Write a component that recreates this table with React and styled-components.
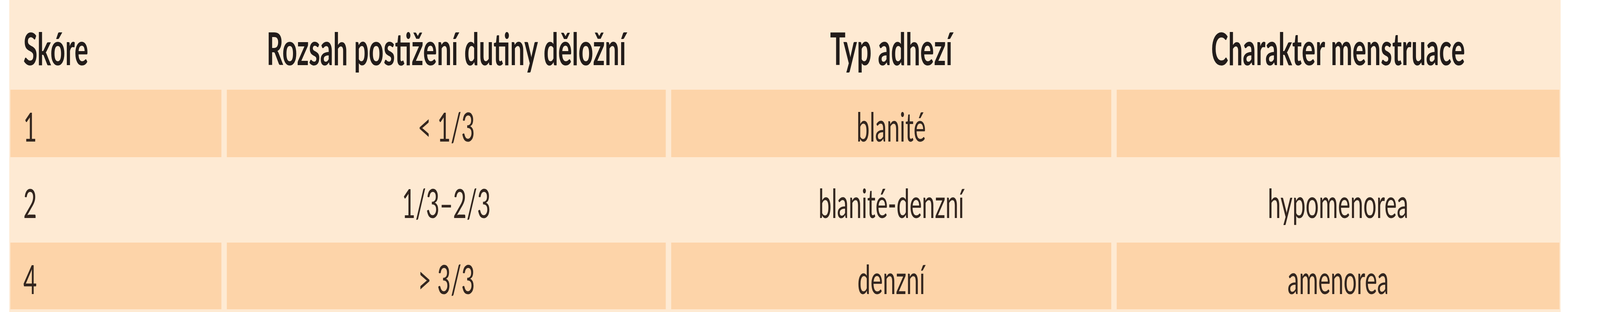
import React, { useState } from "react";
import styled, { createGlobalStyle } from "styled-components";

const DESIGN_WIDTH = 7068;

const GlobalStyle = createGlobalStyle`
  html, body {
    margin: 0;
    padding: 0;
    background: #ffffff;
    overflow: hidden;
  }
`;

const colors = {
  light: "#feead3",
  dark: "#fdd4a9",
  head: "#221c1a",
  text: "#33261f",
};

const Page = styled.div`
  width: 100vw;
  height: 800px;
  overflow: hidden;
  background: #ffffff;
`;

// the table is laid out on a 7068px wide sheet and fitted to the window width
const Sheet = styled.div`
  width: ${DESIGN_WIDTH}px;
  height: 800px;
  display: flex;
  transform: scaleX(${(props) => props.$sx});
  transform-origin: 0 0;
`;

const Table = styled.div`
  margin-left: 41px;
  width: 6853px;
  box-sizing: border-box;
  padding: 0 5px 7px;
  display: grid;
  grid-template-columns: 932px 1939px 1944px 1956px;
  grid-template-rows: 230px 173px 219px 171px;
  column-gap: 24px;
  background: ${colors.light};
  font-family: Lato, "Liberation Sans", sans-serif;
`;

const Cell = styled.div`
  display: flex;
  align-items: center;
  justify-content: ${(props) => (props.$left ? "flex-start" : "center")};
  padding-left: ${(props) => (props.$left ? "57px" : "0")};
  padding-top: ${(props) => (props.$head ? "15px" : "12px")};
  box-sizing: border-box;
  background: ${(props) => (props.$shade ? colors.dark : "transparent")};
  color: ${(props) => (props.$head ? colors.head : colors.text)};
  font-size: ${(props) => (props.$head ? "114px" : "103px")};
  font-weight: ${(props) => (props.$head ? 700 : 400)};
  white-space: nowrap;
`;

const headers = [
  "Skóre",
  "Rozsah postižení dutiny děložní",
  "Typ adhezí",
  "Charakter menstruace",
];

const rows = [
  ["1", "< 1/3", "blanité", ""],
  ["2", "1/3–2/3", "blanité-denzní", "hypomenorea"],
  ["4", "> 3/3", "denzní", "amenorea"],
];

const App = () => {
  const [sx] = useState(() =>
    Math.min(1, window.innerWidth / DESIGN_WIDTH)
  );

  return (
    <Page>
      <GlobalStyle />
      <Sheet $sx={sx}>
        <Table>
          {headers.map((h, i) => (
            <Cell key={h} $head $left={i === 0}>
              {h}
            </Cell>
          ))}
          {rows.map((row, r) =>
            row.map((value, c) => (
              <Cell key={`${r}-${c}`} $shade={r % 2 === 0} $left={c === 0}>
                {value}
              </Cell>
            ))
          )}
        </Table>
      </Sheet>
    </Page>
  );
};

export default App;
